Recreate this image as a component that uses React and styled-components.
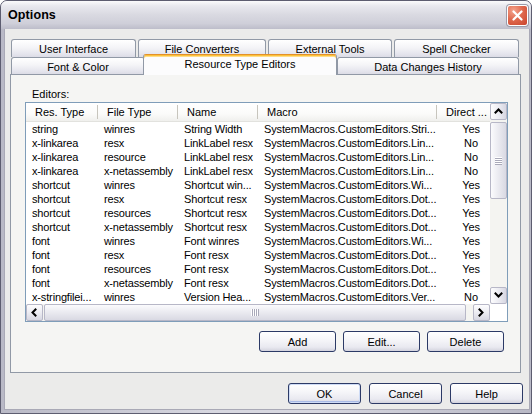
import React from 'react';
import styled, { createGlobalStyle, css } from 'styled-components';

const GlobalStyle = createGlobalStyle`
  html, body { margin: 0; padding: 0; background: #ffffff; }
  body { font-family: "Liberation Sans", Arial, sans-serif; font-size: 11px; color: #000; }
  * { box-sizing: border-box; }
`;

const FONT = `"Liberation Sans", Arial, sans-serif`;

const Window = styled.div`
  width: 532px;
  height: 414px;
  display: flex;
  flex-direction: column;
  border: 1px solid #5d5d70;
  border-radius: 7px 7px 0 0;
  background: #c9c9d4;
  overflow: hidden;
`;

const TitleBar = styled.div`
  height: 28px;
  flex: none;
  display: flex;
  align-items: center;
  justify-content: space-between;
  padding: 0 3px 0 7px;
  background: linear-gradient(180deg, #fbfbfc 0%, #e8e8ee 18%, #d9d9e1 50%, #cfcfd9 80%, #bdbdca 100%);
`;

const Title = styled.span`
  font: bold 12.5px ${FONT};
  color: #000;
  letter-spacing: 0.1px;
`;

const CloseButton = styled.div`
  width: 21px;
  height: 21px;
  display: flex;
  align-items: center;
  justify-content: center;
  border: 1px solid #ffffff;
  border-radius: 3px;
  box-shadow: 0 0 0 1px #9a9aa8;
  background: radial-gradient(circle at 30% 25%, #f4a48e 0%, #e06a4f 45%, #c9432c 100%);
`;

const Frame = styled.div`
  flex: 1;
  display: flex;
  padding: 0 3px 3px;
  background: linear-gradient(90deg, #b9b9c6, #d7d7e0 40%, #d7d7e0 60%, #b9b9c6);
`;

const Body = styled.div`
  flex: 1;
  display: flex;
  flex-direction: column;
  padding: 10px 8px 0 5px;
  background: #ebebea;
  border-left: 1px solid #a9a9b6;
  border-right: 1px solid #a9a9b6;
  border-bottom: 1px solid #a9a9b6;
`;

const TabStrip = styled.div`
  display: flex;
  flex-direction: column;
  padding: 0 2px 0 1px;
`;

const TabRow = styled.div`
  display: flex;
  align-items: flex-end;
  height: ${p => p.$h}px;
  gap: ${p => p.$gap}px;
`;

const Tab = styled.div`
  width: ${p => (p.$w ? `${p.$w}px` : 'auto')};
  flex: ${p => (p.$grow ? 1 : 'none')};
  height: ${p => p.$h}px;
  display: flex;
  align-items: center;
  justify-content: center;
  padding-top: 1px;
  border: 1px solid #9199a6;
  border-bottom: none;
  border-radius: 3px 3px 0 0;
  background: linear-gradient(180deg, #ffffff 0%, #f4f4f7 45%, #e6e6ee 80%, #dcdce6 100%);
  white-space: nowrap;
  ${p =>
    p.$selected &&
    css`
      position: relative;
      z-index: 2;
      height: 21px;
      margin-left: -2px;
      margin-bottom: -1px;
      padding-top: 0;
      padding-bottom: 2px;
      border-top: 1px solid #e3912a;
      box-shadow: inset 0 1px 0 #fcc23c, inset 0 2px 0 #fedd8a;
      background: #fcfcfd;
    `}
`;

const Panel = styled.div`
  display: flex;
  flex-direction: column;
  align-items: flex-start;
  padding: 13px 12px 20px 14px;
  border: 1px solid #9199a6;
  background: #f5f5f3;
`;

const Label = styled.div`
  line-height: 13px;
  height: 13px;
  margin: 0 0 1px 7px;
`;

const ListView = styled.div`
  width: 483px;
  height: 220px;
  border: 1px solid #7f9db9;
  background: #ffffff;
  display: grid;
  grid-template-columns: 464px 17px;
  grid-template-rows: 201px 17px;
`;

const ListContent = styled.div`
  overflow: hidden;
  display: flex;
  flex-direction: column;
`;

const HeaderRow = styled.div`
  flex: none;
  display: flex;
  height: 19px;
  background: linear-gradient(180deg, #ffffff 0%, #fbfbfa 60%, #f0f0ed 100%);
  border-bottom: 1px solid #e2e2de;
`;

const HeaderCell = styled.div`
  flex: none;
  width: ${p => p.$w}px;
  display: flex;
  align-items: center;
`;

const HeaderText = styled.span`
  flex: 1;
  padding-left: 9px;
  white-space: nowrap;
  overflow: hidden;
`;

const Divider = styled.span`
  flex: none;
  width: 1px;
  height: 14px;
  margin-top: -1px;
  background: #c7c5bd;
`;

const Row = styled.div`
  flex: none;
  display: flex;
  height: 14px;
  align-items: center;
`;

const Cell = styled.div`
  flex: none;
  width: ${p => p.$w}px;
  padding-left: ${p => (p.$center ? 7 : 6)}px;
  text-align: ${p => (p.$center ? 'center' : 'left')};
  white-space: nowrap;
  overflow: hidden;
  line-height: 14px;
  letter-spacing: -0.15px;
`;

const ScrollBar = styled.div`
  display: flex;
  flex-direction: ${p => (p.$vertical ? 'column' : 'row')};
  background: #f4f4f1;
`;

const ScrollButton = styled.div`
  flex: none;
  width: 17px;
  height: 17px;
  display: flex;
  align-items: center;
  justify-content: center;
  border: 1px solid #b7b7c7;
  border-radius: 2px;
  background: ${p =>
    p.$vertical
      ? 'linear-gradient(90deg, #fdfdfe 0%, #ececf2 50%, #d7d7e2 100%)'
      : 'linear-gradient(180deg, #fdfdfe 0%, #ececf2 50%, #d7d7e2 100%)'};
`;

const Track = styled.div`
  flex: 1;
  display: flex;
  flex-direction: ${p => (p.$vertical ? 'column' : 'row')};
  padding: ${p => (p.$vertical ? '2px 0 0 0' : '0 0 0 1px')};
`;

const Thumb = styled.div`
  flex: none;
  ${p => (p.$vertical ? css`height: ${p.$size}px; width: 17px;` : css`width: ${p.$size}px; height: 17px;`)}
  display: flex;
  align-items: center;
  justify-content: center;
  border: 1px solid #b7b7c7;
  border-radius: 2px;
  background: ${p =>
    p.$vertical
      ? 'linear-gradient(90deg, #fbfbfd 0%, #eaeaf0 50%, #d9d9e3 100%)'
      : 'linear-gradient(180deg, #fbfbfd 0%, #eaeaf0 50%, #d9d9e3 100%)'};
`;

const Grip = styled.div`
  ${p =>
    p.$vertical
      ? css`
          width: 7px;
          height: 8px;
          background: repeating-linear-gradient(180deg, #ffffff 0 1px, #a9a9b9 1px 2px);
        `
      : css`
          width: 8px;
          height: 7px;
          background: repeating-linear-gradient(90deg, #ffffff 0 1px, #a9a9b9 1px 2px);
        `}
`;

const Corner = styled.div`
  background: #ffffff;
`;

const ButtonRow = styled.div`
  align-self: stretch;
  display: flex;
  justify-content: flex-end;
  gap: 7px;
  margin-top: 9px;
  padding-right: 4px;
`;

const DialogButtons = styled.div`
  display: flex;
  justify-content: flex-end;
  gap: 8px;
  margin: 10px -2px 0 0;
`;

const Button = styled.div`
  width: ${p => p.$w}px;
  height: 21px;
  display: flex;
  align-items: center;
  justify-content: center;
  font: 11px ${FONT};
  color: #000;
  border: 1px solid #2c3a66;
  border-radius: 3px;
  background: linear-gradient(180deg, #ffffff 0%, #f6f6f9 40%, #e9e9f0 80%, #d3d3de 100%);
  ${p =>
    p.$default &&
    css`
      box-shadow: inset 0 0 0 1px #cfdcf6, inset 0 -1px 0 1px #a9bbe6;
    `}
`;

const Chevron = ({ dir }) => {
  const pts = {
    up: '1.5,5.5 4.5,2.5 7.5,5.5',
    down: '1.5,2.5 4.5,5.5 7.5,2.5',
    left: '5.5,1.5 2.5,4.5 5.5,7.5',
    right: '2.5,1.5 5.5,4.5 2.5,7.5',
  }[dir];
  return (
    <svg width="9" height="9" viewBox="0 0 9 9">
      <polyline points={pts} fill="none" stroke="#000" strokeWidth="2" strokeLinecap="square" />
    </svg>
  );
};

const columns = [
  { w: 72, label: 'Res. Type' },
  { w: 80, label: 'File Type' },
  { w: 80, label: 'Name' },
  { w: 179, label: 'Macro' },
  { w: 61, label: 'Direct ...', center: true },
];

const M = 'SystemMacros.CustomEditors.';
const rows = [
  ['string', 'winres', 'String Width', M + 'Stri...', 'Yes'],
  ['x-linkarea', 'resx', 'LinkLabel resx', M + 'Lin...', 'No'],
  ['x-linkarea', 'resource', 'LinkLabel resx', M + 'Lin...', 'No'],
  ['x-linkarea', 'x-netassembly', 'LinkLabel resx', M + 'Lin...', 'No'],
  ['shortcut', 'winres', 'Shortcut win...', M + 'Wi...', 'Yes'],
  ['shortcut', 'resx', 'Shortcut resx', M + 'Dot...', 'Yes'],
  ['shortcut', 'resources', 'Shortcut resx', M + 'Dot...', 'Yes'],
  ['shortcut', 'x-netassembly', 'Shortcut resx', M + 'Dot...', 'Yes'],
  ['font', 'winres', 'Font winres', M + 'Wi...', 'Yes'],
  ['font', 'resx', 'Font resx', M + 'Dot...', 'Yes'],
  ['font', 'resources', 'Font resx', M + 'Dot...', 'Yes'],
  ['font', 'x-netassembly', 'Font resx', M + 'Dot...', 'Yes'],
  ['x-stringfilei...', 'winres', 'Version Hea...', M + 'Ver...', 'No'],
];

export default function App() {
  return (
    <>
      <GlobalStyle />
      <Window>
        <TitleBar>
          <Title>Options</Title>
          <CloseButton>
            <svg width="11" height="11" viewBox="0 0 11 11">
              <path d="M1.5 1.5 L9.5 9.5 M9.5 1.5 L1.5 9.5" stroke="#fff" strokeWidth="2.2" strokeLinecap="round" />
            </svg>
          </CloseButton>
        </TitleBar>
        <Frame>
          <Body>
            <TabStrip>
              <TabRow $h={18} $gap={2}>
                <Tab $w={125} $h={18}>User Interface</Tab>
                <Tab $w={128} $h={18}>File Converters</Tab>
                <Tab $w={124} $h={18}>External Tools</Tab>
                <Tab $grow $h={18}>Spell Checker</Tab>
              </TabRow>
              <TabRow $h={17} $gap={0}>
                <Tab $w={134} $h={17}>Font &amp; Color</Tab>
                <Tab $w={194} $h={17} $selected>Resource Type Editors</Tab>
                <Tab $grow $h={17}>Data Changes History</Tab>
              </TabRow>
            </TabStrip>
            <Panel>
              <Label>Editors:</Label>
              <ListView>
                <ListContent>
                  <HeaderRow>
                    {columns.map((c, i) => (
                      <HeaderCell key={c.label} $w={c.w}>
                        <HeaderText>{c.label}</HeaderText>
                        {i < columns.length - 1 && <Divider />}
                      </HeaderCell>
                    ))}
                  </HeaderRow>
                  {rows.map((r, ri) => (
                    <Row key={ri}>
                      {r.map((v, ci) => (
                        <Cell key={ci} $w={columns[ci].w} $center={columns[ci].center}>
                          {v}
                        </Cell>
                      ))}
                    </Row>
                  ))}
                </ListContent>
                <ScrollBar $vertical>
                  <ScrollButton $vertical>
                    <Chevron dir="up" />
                  </ScrollButton>
                  <Track $vertical>
                    <Thumb $vertical $size={77}>
                      <Grip $vertical />
                    </Thumb>
                  </Track>
                  <ScrollButton $vertical>
                    <Chevron dir="down" />
                  </ScrollButton>
                </ScrollBar>
                <ScrollBar>
                  <ScrollButton>
                    <Chevron dir="left" />
                  </ScrollButton>
                  <Track>
                    <Thumb $size={422}>
                      <Grip />
                    </Thumb>
                  </Track>
                  <ScrollButton>
                    <Chevron dir="right" />
                  </ScrollButton>
                </ScrollBar>
                <Corner />
              </ListView>
              <ButtonRow>
                <Button $w={77}>Add</Button>
                <Button $w={77}>Edit...</Button>
                <Button $w={77}>Delete</Button>
              </ButtonRow>
            </Panel>
            <DialogButtons>
              <Button $w={73} $default>OK</Button>
              <Button $w={73}>Cancel</Button>
              <Button $w={73}>Help</Button>
            </DialogButtons>
          </Body>
        </Frame>
      </Window>
    </>
  );
}
